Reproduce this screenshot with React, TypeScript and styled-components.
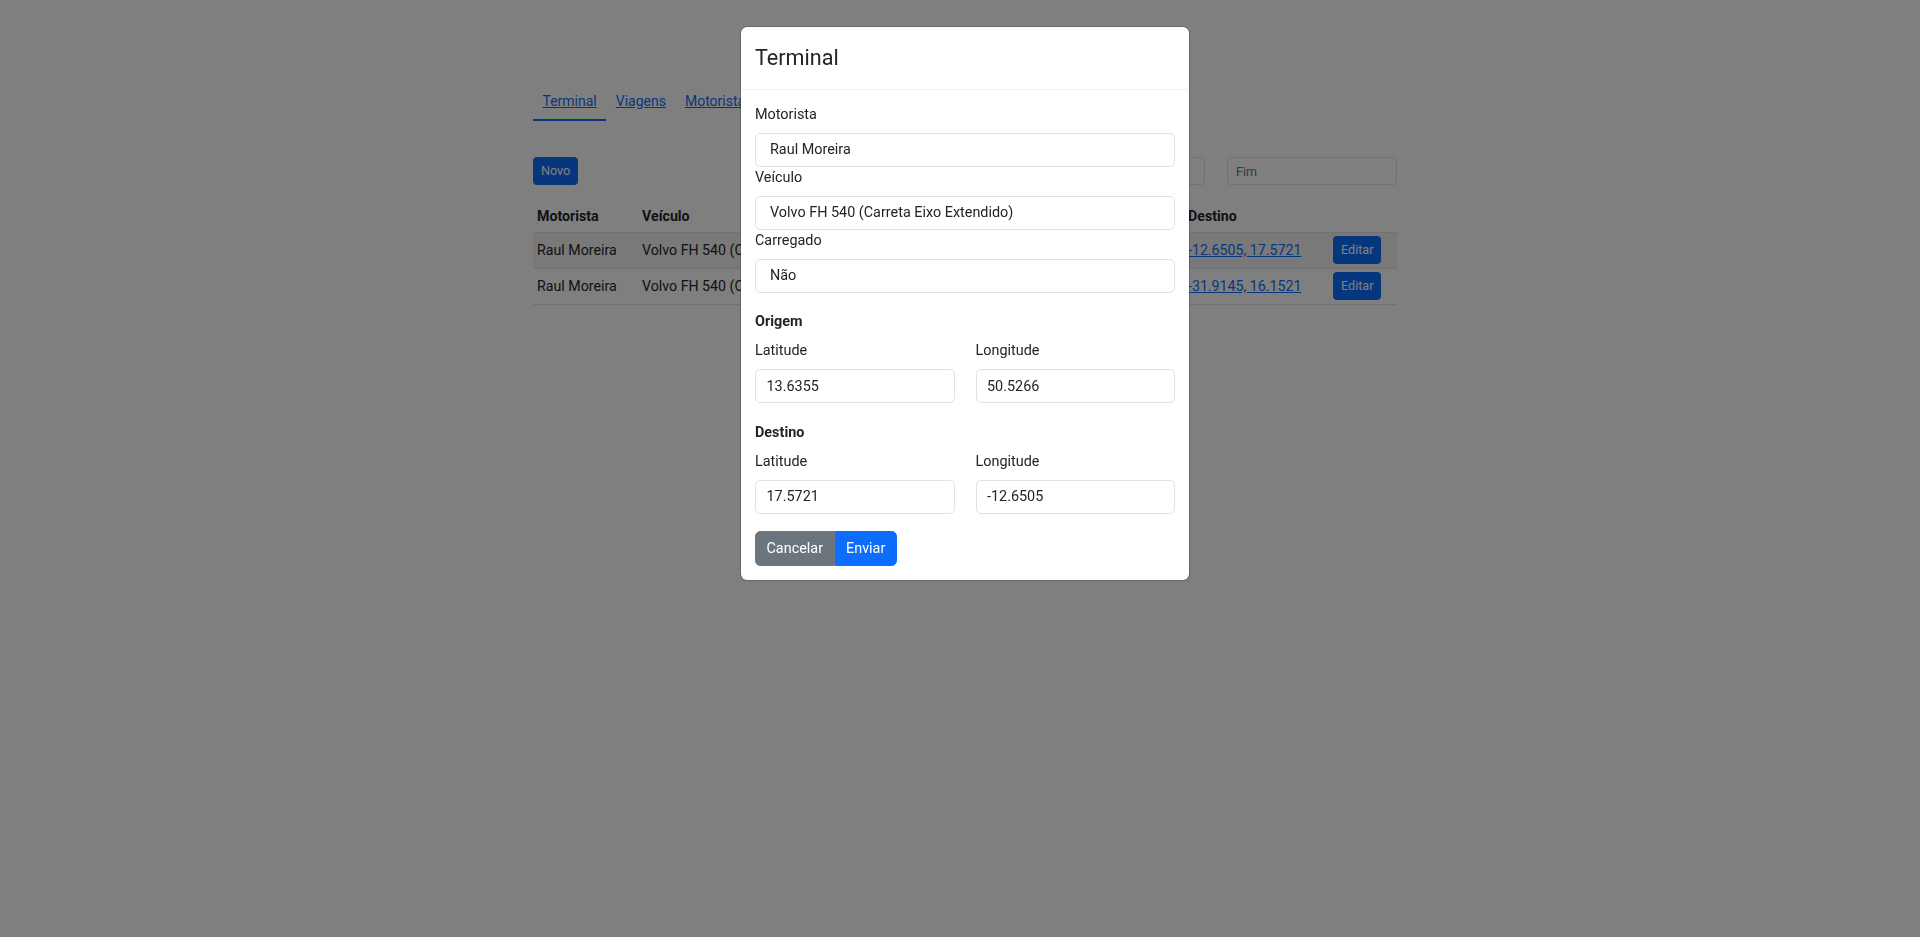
import { FC } from "react";
import styled, { createGlobalStyle } from "styled-components";

const GlobalStyle = createGlobalStyle`
    * { box-sizing: border-box; }
    body {
        margin: 0;
        background: #FFFFFF;
        font-family: Roboto, "Liberation Sans", sans-serif;
        font-size: 14.2px;
        line-height: 21px;
        color: #212529;
    }
`

const viagens = [
    { motorista: 'Raul Moreira', veiculo: 'Volvo FH 540 (Carreta Eixo Extendido)', carregado: 'Não', origem: '50.5266, 13.6355', destino: '-12.6505, 17.5721' },
    { motorista: 'Raul Moreira', veiculo: 'Volvo FH 540 (Carreta Eixo Extendido)', carregado: 'Sim', origem: '44.1203, -8.3310', destino: '-31.9145, 16.1521' },
]

const motoristas = ['Raul Moreira', 'Ana Souza', 'Carlos Lima'];
const veiculos = ['Volvo FH 540 (Carreta Eixo Extendido)', 'Scania R450 (Truck)'];

const App: FC = () => {
    return <>
        <GlobalStyle />
        <Page>
            <Container>
                <Tabs>
                    <Tab href="#" active>Terminal</Tab>
                    <Tab href="#">Viagens</Tab>
                    <Tab href="#">Motoristas</Tab>
                    <Tab href="#">Veículos</Tab>
                </Tabs>
                <Toolbar>
                    <SmallButton>Novo</SmallButton>
                    <Filters>
                        <DateInput placeholder="Início" />
                        <DateInput placeholder="Fim" />
                    </Filters>
                </Toolbar>
                <Table>
                    <colgroup>
                        <col style={{ width: 105 }} />
                        <col style={{ width: 230 }} />
                        <col style={{ width: 90 }} />
                        <col style={{ width: 226 }} />
                        <col style={{ width: 145 }} />
                        <col style={{ width: 68 }} />
                    </colgroup>
                    <thead>
                        <tr>
                            <Th>Motorista</Th>
                            <Th>Veículo</Th>
                            <Th>Carregado</Th>
                            <Th>Origem</Th>
                            <Th>Destino</Th>
                            <Th></Th>
                        </tr>
                    </thead>
                    <tbody>
                        {viagens.map((v, i) => <Tr key={i} striped={i % 2 === 0}>
                            <Td>{v.motorista}</Td>
                            <Td>{v.veiculo}</Td>
                            <Td>{v.carregado}</Td>
                            <Td><Link href="#">{v.origem}</Link></Td>
                            <Td><Link href="#">{v.destino}</Link></Td>
                            <Td><SmallButton>Editar</SmallButton></Td>
                        </Tr>)}
                    </tbody>
                </Table>
            </Container>
        </Page>
        <Backdrop>
            <Modal>
                <ModalHeader>
                    <ModalTitle>Terminal</ModalTitle>
                </ModalHeader>
                <ModalBody>
                    <Label>Motorista</Label>
                    <Select defaultValue="Raul Moreira">
                        {motoristas.map(m => <option key={m}>{m}</option>)}
                    </Select>
                    <Label>Veículo</Label>
                    <Select defaultValue={veiculos[0]}>
                        {veiculos.map(v => <option key={v}>{v}</option>)}
                    </Select>
                    <Label>Carregado</Label>
                    <Select defaultValue="Não">
                        <option>Não</option>
                        <option>Sim</option>
                    </Select>

                    <SectionTitle>Origem</SectionTitle>
                    <CoordRow>
                        <div>
                            <Label>Latitude</Label>
                            <Input defaultValue="13.6355" />
                        </div>
                        <div>
                            <Label>Longitude</Label>
                            <Input defaultValue="50.5266" />
                        </div>
                    </CoordRow>

                    <SectionTitle>Destino</SectionTitle>
                    <CoordRow>
                        <div>
                            <Label>Latitude</Label>
                            <Input defaultValue="17.5721" />
                        </div>
                        <div>
                            <Label>Longitude</Label>
                            <Input defaultValue="-12.6505" />
                        </div>
                    </CoordRow>

                    <ButtonGroup>
                        <GroupButton variant="secondary">Cancelar</GroupButton>
                        <GroupButton variant="primary">Enviar</GroupButton>
                    </ButtonGroup>
                </ModalBody>
            </Modal>
        </Backdrop>
    </>
}

const Page = styled.div`
    display: flex;
    justify-content: center;
    padding: 84px 0 0 10px;
`

const Container = styled.div`
    width: 864px;
`

const Tabs = styled.nav`
    display: flex;
`

const Tab = styled.a<{ active?: boolean }>`
    display: block;
    padding: 7px 9.5px 7px;
    color: #0d6efd;
    text-decoration: underline;
    font-size: 14px;
    line-height: 21px;
    border-bottom: 2px solid ${p => p.active ? '#0d6efd' : 'transparent'};
`

const Toolbar = styled.div`
    display: flex;
    justify-content: space-between;
    align-items: center;
    margin-top: 36px;
`

const Filters = styled.div`
    display: flex;
    gap: 22px;
`

const DateInput = styled.input`
    width: 170px;
    height: 28px;
    padding: 3.5px 8px;
    border: 1px solid #dee2e6;
    border-radius: 3.5px;
    font-family: Roboto, sans-serif;
    font-size: 12.6px;
    color: #212529;

    &::placeholder {
        color: #6c757d;
    }
`

const SmallButton = styled.button`
    height: 28px;
    padding: 3.5px 7px;
    background: #0d6efd;
    border: 1px solid #0d6efd;
    border-radius: 3.5px;
    color: #FFFFFF;
    font-family: Roboto, sans-serif;
    font-size: 12.6px;
    line-height: 18px;
`

const Table = styled.table`
    width: 864px;
    margin-top: 11.5px;
    border-collapse: collapse;
    table-layout: fixed;
`

const Th = styled.th`
    padding: 9px 4px 5px;
    text-align: left;
    font-weight: 700;
    white-space: nowrap;
    overflow: hidden;
    border-bottom: 1px solid #dee2e6;
`

const Tr = styled.tr<{ striped?: boolean }>`
    background: ${p => p.striped ? 'rgba(0, 0, 0, 0.05)' : 'transparent'};
`

const Td = styled.td`
    padding: 3.5px 4px;
    height: 35px;
    white-space: nowrap;
    overflow: hidden;
    border-bottom: 1px solid #dee2e6;
    vertical-align: middle;
`

const Link = styled.a`
    color: #0d6efd;
    text-decoration: underline;
`

const Backdrop = styled.div`
    position: fixed;
    inset: 0;
    background: rgba(0, 0, 0, 0.5);
    display: flex;
    justify-content: center;
    align-items: flex-start;
    padding: 26px 0 0 10px;
`

const Modal = styled.div`
    width: 450px;
    background: #FFFFFF;
    border: 1px solid rgba(0, 0, 0, 0.175);
    border-radius: 7px;
    background-clip: padding-box;
`

const ModalHeader = styled.div`
    padding: 15px 14px;
    border-bottom: 1px solid #f0f1f2;
`

const ModalTitle = styled.h4`
    margin: 0;
    font-size: 21.6px;
    font-weight: 400;
    line-height: 31.5px;
    color: #212529;
`

const ModalBody = styled.div`
    padding: 14px;
    font-size: 14.4px;
`

const Label = styled.label`
    display: block;
    margin-bottom: 8px;
    line-height: 21px;
`

const Select = styled.select`
    display: block;
    width: 100%;
    height: 34px;
    padding: 0 10.5px 0 14px;
    appearance: none;
    background: #FFFFFF;
    border: 1px solid #dee2e6;
    border-radius: 5.25px;
    font-family: Roboto, sans-serif;
    font-size: 14.4px;
    color: #212529;
`

const Input = styled.input`
    display: block;
    width: 100%;
    height: 34px;
    padding: 0 10.5px;
    border: 1px solid #dee2e6;
    border-radius: 5.25px;
    font-family: Roboto, sans-serif;
    font-size: 14.4px;
    color: #212529;
`

const SectionTitle = styled.h6`
    margin: 18.5px 0 8px;
    font-size: 14.4px;
    font-weight: 700;
    line-height: 21px;
`

const CoordRow = styled.div`
    display: grid;
    grid-template-columns: 1fr 1fr;
    column-gap: 21px;
`

const ButtonGroup = styled.div`
    display: inline-flex;
    margin-top: 17.5px;
`

const GroupButton = styled.button<{ variant: 'primary' | 'secondary' }>`
    height: 34.5px;
    padding: 5.25px 10.5px;
    border: 1px solid ${p => p.variant === 'primary' ? '#0d6efd' : '#6c757d'};
    background: ${p => p.variant === 'primary' ? '#0d6efd' : '#6c757d'};
    color: #FFFFFF;
    font-family: Roboto, sans-serif;
    font-size: 14.4px;
    line-height: 21px;
    border-radius: 0;

    &:first-child {
        border-radius: 5.25px 0 0 5.25px;
    }

    &:last-child {
        border-radius: 0 5.25px 5.25px 0;
    }
`

export default App;
